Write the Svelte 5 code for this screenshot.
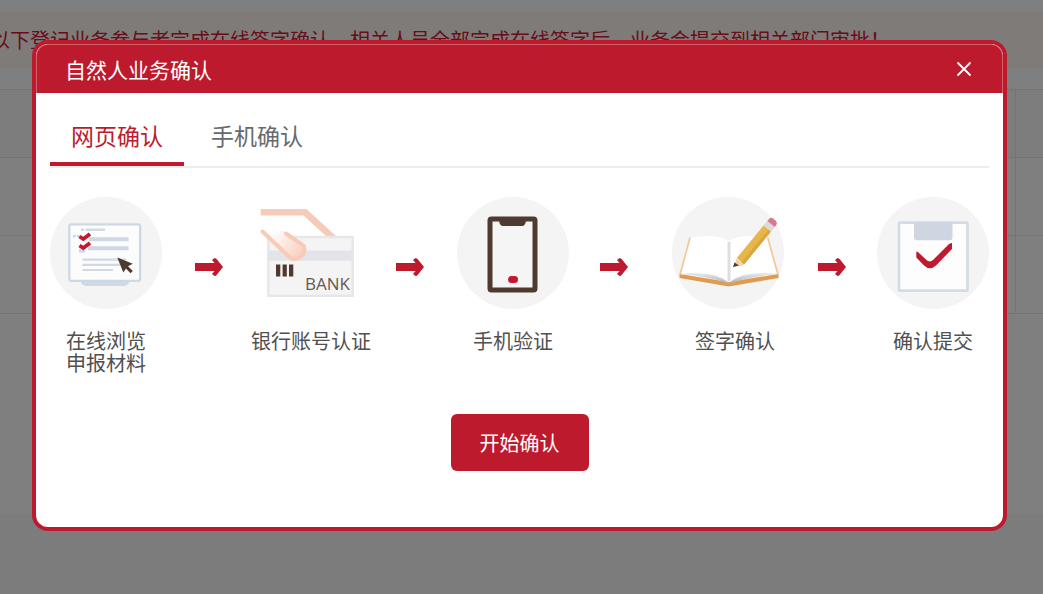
<script>
  let active = $state(0);
  let open = $state(true);
  const tabs = ['网页确认', '手机确认'];
  const steps = [
    { icon: 'screen', label: ['在线浏览', '申报材料'] },
    { icon: 'card', label: ['银行账号认证'] },
    { icon: 'phone', label: ['手机验证'] },
    { icon: 'book', label: ['签字确认'] },
    { icon: 'submit', label: ['确认提交'] }
  ];
</script>

<div class="page">
  <p class="notice">以下登记业务参与者完成在线签字确认，相关人员全部完成在线签字后，业务会提交到相关部门审批！</p>
  <div class="grid-lines" aria-hidden="true">
    <div class="line head"><span></span></div>
    <div class="line"><span></span></div>
    <div class="line"><span></span></div>
  </div>
</div>

{#if open}
<div class="overlay">
  <div class="dialog" role="dialog" aria-modal="true" aria-labelledby="dialog-title">
    <header>
      <h1 id="dialog-title">自然人业务确认</h1>
      <button class="close" type="button" aria-label="关闭" onclick={() => (open = false)}>
        <svg width="16" height="16" viewBox="0 0 16 16"><path d="M1.5 1.5 14.5 14.5M14.5 1.5 1.5 14.5" fill="none" stroke="#fff" stroke-width="1.8" /></svg>
      </button>
    </header>
    <div class="body">
      <div class="tabs" role="tablist">
        {#each tabs as tab, i}
          <button type="button" role="tab" class="tab" class:active={active === i} aria-selected={active === i} onclick={() => (active = i)}>{tab}</button>
        {/each}
      </div>
      <div class="steps">
        {#each steps as step, i}
          <div class="step {step.icon}" style="grid-column: {i * 4 + 1}">
            {#if step.icon === 'screen'}
              <svg width="112" height="112" viewBox="0 0 112 112">
                <circle cx="56" cy="56" r="56" fill="#f4f4f4" />
                <path d="M30 84H80Q78 89 73 89H37Q32 89 30 84Z" fill="#cfd8e4" />
                <rect x="19.3" y="27.3" width="70.8" height="56.5" rx="2" fill="#fcfcfd" stroke="#cdd8e5" stroke-width="2.3" />
                <path d="M31 32.7h3M35.5 32.7H55" stroke="#d3dbe6" stroke-width="2.6" />
                <path d="M23 39.3h2.5M27 39.3h3" stroke="#b9cbe3" stroke-width="2" />
                <path d="M39 42.3H78.5M38 51.3H78.5M29 53.5h6" stroke="#ced7e3" stroke-width="4" />
                <path d="M32.5 62.7H76M32.5 67.8H70M32.5 73H63" stroke="#cfd8e4" stroke-width="2.2" />
                <path d="M29.5 39.5 33.3 42 40 37M29.5 48.5 33.3 51 40 46" fill="none" stroke="#c3192f" stroke-width="3.8" />
                <path d="M67.3 60.5 82.8 66.7 78 69.2 82.8 74 80.5 76.3 76 71.5 73.3 75.5Z" fill="#50392e" />
              </svg>
            {:else if step.icon === 'card'}
              <svg width="118" height="112" viewBox="0 0 118 112">
                <defs>
                  <linearGradient id="finger" x1="20" y1="34" x2="52" y2="60" gradientUnits="userSpaceOnUse">
                    <stop offset="0" stop-color="#fff" stop-opacity=".9" /><stop offset="1" stop-color="#f9ccba" />
                  </linearGradient>
                </defs>
                <path d="M9.7 12H55.5L86 40H76L52.5 18.5H9.7Z" fill="#f7cbb9" />
                <rect x="17.3" y="40" width="84.4" height="58.8" fill="#f4f4f4" stroke="#e5e7e9" stroke-width="2.4" />
                <path d="M17 53.5H102V63.8H17Z" fill="#e2e4e7" />
                <path d="M12 34H33L50.5 48.7A8.5 8.5 0 0 1 39 61Z" fill="url(#finger)" />
                <path d="M11.5 34.5 38.5 60.3A9.5 9.5 0 0 0 52.5 48.5L35 36.5" fill="none" stroke="#f8cab8" stroke-width="4" stroke-linecap="round" />
                <path d="M25 67.5h4.3v12H25zM31.6 67.5h4.2v12h-4.2zM38 67.5h4.3v12H38z" fill="#503a30" />
                <text x="54" y="93" font-size="17" fill="#69574f">BANK</text>
              </svg>
            {:else if step.icon === 'phone'}
              <svg width="112" height="112" viewBox="0 0 112 112">
                <circle cx="56" cy="56" r="56" fill="#f4f4f4" />
                <rect x="33" y="22" width="45" height="71" rx="1.5" fill="#f5f5f5" stroke="#50392f" stroke-width="5" />
                <path d="M42 23H69Q68.5 29 65 29H46Q42.5 29 42 23Z" fill="#50392f" />
                <rect x="51" y="79" width="10" height="7" rx="3.5" fill="#c3192f" />
              </svg>
            {:else if step.icon === 'book'}
              <svg width="112" height="112" viewBox="0 0 112 112">
                <defs>
                  <linearGradient id="spine"><stop offset="0" stop-color="#fff" /><stop offset=".5" stop-color="#d4d6d8" /><stop offset="1" stop-color="#fff" /></linearGradient>
                  <linearGradient id="edge" x1="0" y1="76" x2="0" y2="86" gradientUnits="userSpaceOnUse"><stop offset="0" stop-color="#eef0f2" /><stop offset="1" stop-color="#b3b8be" /></linearGradient>
                </defs>
                <circle cx="56" cy="56" r="56" fill="#f4f4f4" />
                <g transform="translate(0 -1)">
                <path d="M7.5 78 56.7 86 106.5 78V82L56.7 90.5 7.5 82Z" fill="#e19b4e" />
                <path d="M8 78Q40 73 56.7 87Q74 73 106 78Q80 80 57 87.5Q36 80 8 78Z" fill="url(#edge)" />
                <path d="M18 42Q42 37 56.7 45V86Q44 75 8.5 77.5Z" fill="#fff" />
                <path d="M95.7 42Q71 37 56.7 45V86Q70 75 105.5 77.5Z" fill="#fff" />
                <rect x="54.5" y="46" width="5" height="39" fill="url(#spine)" />
                <path d="M18 41.5 8.2 78M95.7 41.5 105.8 78" stroke="#f5c797" stroke-width="1.7" />
                <path d="M61.5 71 64.5 62.5 72 69Z" fill="#f3cfaa" />
                <path d="M61 71 62.5 66.5 67 69.5Z" fill="#454143" />
                <path d="M64.8 62 91.5 29.5 99 35.5 72 68.5Z" fill="#e7b64b" />
                <path d="M69.5 66.3 96.5 33.5 99 35.5 72 68.5Z" fill="#dba640" />
                <path d="M91.5 29.5 95.3 25 102.8 31 99 35.5Z" fill="#d8dadd" />
                <path d="M95.3 25 97.5 22.5Q99.3 21 101.2 22.6L104 25Q105.5 26.5 104.5 28.5L102.8 31Z" fill="#d9798c" />
                </g>
              </svg>
            {:else}
              <svg width="112" height="112" viewBox="0 0 112 112">
                <circle cx="56" cy="56" r="56" fill="#f4f4f4" />
                <rect x="22" y="25.7" width="68.5" height="68" rx="1.5" fill="#fdfdfd" stroke="#d2dbe6" stroke-width="2.7" />
                <path d="M37 25H75.5V40.5Q75.5 43.3 72.5 43.3H40Q37 43.3 37 40.5Z" fill="#cfd6e2" />
                <path d="M39.3 54.5Q41 54.5 42.5 56.5L49.5 63Q53 66 56.5 62.5L71.500 47.500Q73.500 45.500 75 46V52L59 68.500Q53 74 47 68.500L39.300 60.500Z" fill="#bf1b30" />
              </svg>
            {/if}
            <p>{#each step.label as line}<span>{line}</span>{/each}</p>
          </div>
          {#if i < steps.length - 1}
            <svg class="arrow" style="grid-column: {i * 4 + 3}" width="28" height="18" viewBox="0 0 28 18" aria-hidden="true">
              <path d="M0 5H19.500L17 2 19.500 0Q21 0 22 1.500L28 9 22 16.500Q21 18 19.500 18L17 16 19.500 13H0Z" fill="#bd1b2d" />
            </svg>
          {/if}
        {/each}
      </div>
      <button class="start" type="button">开始确认</button>
    </div>
  </div>
</div>
{/if}

<style>
  :global(body) {
    margin: 0;
    background: #f9f9f9;
    font-family: "Noto Sans CJK SC", sans-serif;
    overflow: hidden;
  }
  p, h1 { margin: 0; font-weight: 400; }
  button { font: inherit; border: 0; background: none; padding: 0; cursor: pointer; }
  svg { display: block; }

  .page { min-height: 502px; padding-top: 12px; background: #fff; }
  .notice {
    padding: 14px 0;
    text-indent: -10px;
    background: #fff6f3;
    color: #d01a35;
    font-size: 20px;
    line-height: 28px;
    white-space: nowrap;
    overflow: hidden;
  }
  .grid-lines { margin-top: 21px; border-top: 1px solid #e6e9f0; }
  .line { display: flex; height: 77px; padding-right: 27px; border-bottom: 1px solid #e6e9f0; }
  .line.head { height: 67px; background: #fafbfb; }
  .line span { flex: 1; border-right: 1px solid #e6e9f0; }

  .overlay {
    position: fixed;
    inset: 0;
    padding: 40px 36px 40px 32px;
    background: rgba(0, 0, 0, .5);
    overflow: auto;
  }
  .dialog {
    border: 4px solid #bd1b2d;
    border-radius: 16px;
    background: #fff;
    overflow: hidden;
  }
  header {
    display: flex;
    align-items: center;
    justify-content: space-between;
    height: 48px;
    padding: 0 30px 0 28px;
    border: 1px solid #d4606c;
    border-width: 1px 1px 0;
    border-radius: 12px 12px 0 0;
    background: #bd1b2d;
    color: #fff;
  }
  h1 { font-size: 21px; line-height: 30px; }
  .body { padding: 26px 14px 56px; }
  .tabs { display: flex; gap: 6px; border-bottom: 2px solid #eceeee; }
  .tab {
    padding: 0 21px 11px;
    border-bottom: 4px solid transparent;
    color: #666a6d;
    font-size: 23px;
    line-height: 32px;
  }
  .tab.active { border-color: #bd1b2d; color: #bd1b2d; }
  .steps {
    display: grid;
    grid-template-columns: 112px 33fr 28px 28fr 118px 27fr 28px 33fr 112px 31fr 28px 44fr 112px 34fr 28px 31fr 112px;
    padding-top: 29px;
  }
  .step, .arrow { grid-row: 1; }
  .step p {
    margin-top: 21px;
    color: #505050;
    font-size: 20px;
    line-height: 22px;
    text-align: center;
    white-space: nowrap;
  }
  .step span { display: block; }
  .step.book p { padding-left: 14px; }
  .step text { font-family: "Open Sans", "Noto Sans", sans-serif; }
  .arrow { margin-top: 61px; }
  .start {
    display: block;
    margin: 40px auto 0;
    padding: 14px 29px;
    border-radius: 6px;
    background: #bd1b2d;
    color: #fff;
    font-size: 20px;
    line-height: 29px;
  }
</style>
